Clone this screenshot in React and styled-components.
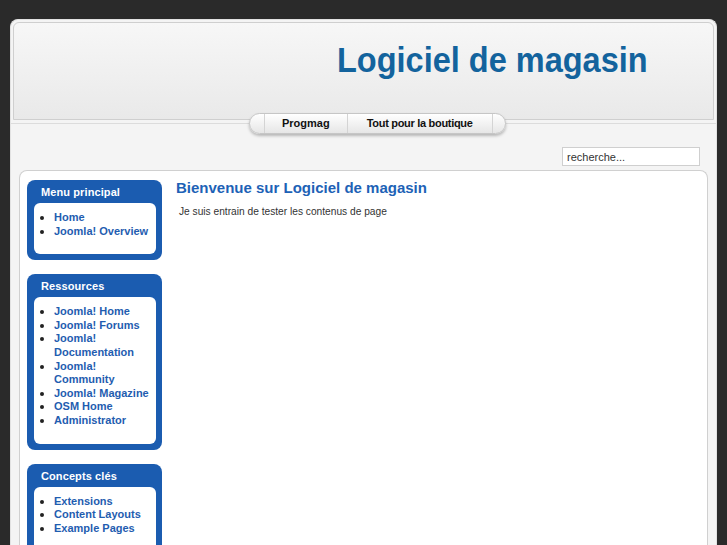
import React from 'react';
import styled, { createGlobalStyle } from 'styled-components';

const Global = createGlobalStyle`
  html, body {
    margin: 0;
    padding: 0;
    background: #2a2a2a;
    font-family: "Liberation Sans", Arial, sans-serif;
  }
`;

const Page = styled.div`
  padding: 19px 10px 0 10px;
  height: 545px;
  box-sizing: border-box;
  overflow: hidden;
`;

const Panel = styled.div`
  background: #f4f4f4;
  border-radius: 8px 8px 0 0;
  border: 1px solid #e2e2e2;
  border-bottom: 0;
  min-height: 560px;
`;

const Header = styled.div`
  margin: 2px 2px 0 2px;
  height: 98px;
  border: 1px solid #cfcfcf;
  border-radius: 6px 6px 0 0;
  background: linear-gradient(#f7f7f7, #e9e9e9);
  box-sizing: border-box;
`;

const SiteTitle = styled.h1`
  margin: 0;
  padding: 17px 0 0 323px;
  font-size: 32.5px;
  line-height: 40px;
  font-weight: bold;
  color: #13639d;
  transform: scaleY(1.06);
  transform-origin: left center;
`;

const NavStrip = styled.div`
  margin-top: 3px;
  border-top: 1px solid #dcdcdc;
  height: 20px;
`;

const Pill = styled.ul`
  display: flex;
  list-style: none;
  margin: -11px 0 0 238px;
  padding: 0 12px 0 14px;
  width: max-content;
  height: 21px;
  border: 1px solid #c6c6c6;
  border-radius: 11px;
  background: linear-gradient(#ffffff, #e6e6e6);
  box-shadow: 0 2px 3px rgba(0, 0, 0, 0.25);
  box-sizing: border-box;
`;

const NavItem = styled.li`
  padding: 0 ${p => p.$tight ? '19px' : '17px'};
  font-size: 11px;
  font-weight: bold;
  line-height: 19px;
  color: #111;
  letter-spacing: ${p => p.$tight ? '-0.3px' : '0'};
  border-left: 1px solid #d4d4d4;
  &:last-child {
    border-right: 1px solid #d4d4d4;
  }
`;

const SearchRow = styled.div`
  display: flex;
  justify-content: flex-end;
  padding: 3px 16px 4px 0;
`;

const Search = styled.input`
  width: 138px;
  height: 19px;
  box-sizing: border-box;
  border: 1px solid #cfcfcf;
  background: #fff;
  font-family: "Liberation Sans", Arial, sans-serif;
  font-size: 11px;
  color: #333;
  padding: 0 4px;
  outline: none;
  &::placeholder {
    color: #333;
  }
`;

const Content = styled.div`
  margin: 0 8px;
  display: flex;
  align-items: flex-start;
  background: #fff;
  border: 1px solid #d0d0d0;
  border-bottom: 0;
  border-radius: 8px 8px 0 0;
  padding: 9px 7px 0 7px;
  min-height: 400px;
`;

const Sidebar = styled.div`
  width: 135px;
  flex-shrink: 0;
`;

const Module = styled.div`
  background: #1b5cb0;
  border-radius: 8px;
  padding: 0 6px 6px 7px;
  margin-bottom: 14px;
`;

const ModuleTitle = styled.h3`
  margin: 0;
  padding-left: 7px;
  height: 23px;
  line-height: 25px;
  font-size: 11px;
  font-weight: bold;
  color: #fff;
  letter-spacing: 0.1px;
`;

const ModuleBody = styled.div`
  background: #fff;
  border-radius: 6px;
  padding: 8px 0 16px 0;
`;

const LinkList = styled.ul`
  margin: 0;
  padding-left: 20px;
  list-style: none;
  font-size: 11px;
  line-height: 13.6px;
`;

const Link = styled.li`
  position: relative;
  font-weight: bold;
  color: #1f5db0;
  &::before {
    content: '';
    position: absolute;
    left: -14px;
    top: 5px;
    width: 4px;
    height: 4px;
    border-radius: 50%;
    background: #222;
  }
`;

const Main = styled.div`
  flex: 1;
  padding-left: 14px;
`;

const Heading = styled.h2`
  margin: -1px 0 0 0;
  font-size: 15px;
  line-height: 18px;
  font-weight: bold;
  color: #1d62b6;
`;

const Text = styled.p`
  margin: 8px 0 0 3px;
  font-size: 10.2px;
  line-height: 13px;
  color: #333;
`;

const modules = [
  { title: 'Menu principal', links: ['Home', 'Joomla! Overview'] },
  {
    title: 'Ressources',
    links: ['Joomla! Home', 'Joomla! Forums', 'Joomla! Documentation', 'Joomla! Community', 'Joomla! Magazine', 'OSM Home', 'Administrator'],
  },
  { title: 'Concepts clés', links: ['Extensions', 'Content Layouts', 'Example Pages'] },
];

export default function App() {
  return (
    <>
      <Global />
      <Page>
        <Panel>
          <Header>
            <SiteTitle>Logiciel de magasin</SiteTitle>
          </Header>
          <NavStrip>
            <Pill>
              <NavItem>Progmag</NavItem>
              <NavItem $tight>Tout pour la boutique</NavItem>
            </Pill>
          </NavStrip>
          <SearchRow>
            <Search type="text" placeholder="recherche..." />
          </SearchRow>
          <Content>
            <Sidebar>
              {modules.map(m => (
                <Module key={m.title}>
                  <ModuleTitle>{m.title}</ModuleTitle>
                  <ModuleBody>
                    <LinkList>
                      {m.links.map(l => <Link key={l}>{l}</Link>)}
                    </LinkList>
                  </ModuleBody>
                </Module>
              ))}
            </Sidebar>
            <Main>
              <Heading>Bienvenue sur Logiciel de magasin</Heading>
              <Text>Je suis entrain de tester les contenus de page</Text>
            </Main>
          </Content>
        </Panel>
      </Page>
    </>
  );
}
